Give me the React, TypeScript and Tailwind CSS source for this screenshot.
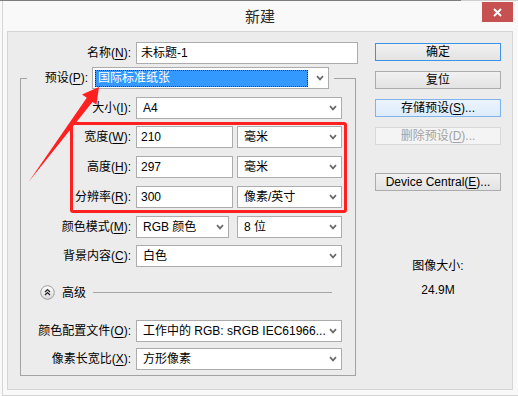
import type { ReactNode } from "react";

const FONT = "font-['Liberation_Sans','Noto_Sans_CJK_SC',sans-serif]";

function Key({ k }: { k: string }) {
  return <span className="underline underline-offset-[2px]">{k}</span>;
}

function Chevron() {
  return (
    <svg width="8" height="6" viewBox="0 0 8 6" className="shrink-0">
      <path d="M1 1.2 L4 4.4 L7 1.2" fill="none" stroke="#6a6a6a" strokeWidth="1.7" />
    </svg>
  );
}

function Select({ value, className = "" }: { value: ReactNode; className?: string }) {
  return (
    <div
      className={`flex h-[22px] shrink-0 items-center justify-between border border-[#acacac] bg-white pl-[6px] pr-[4px] ${className}`}
    >
      <span className="truncate whitespace-nowrap">{value}</span>
      <Chevron />
    </div>
  );
}

function Field({ value, className = "" }: { value: string; className?: string }) {
  return (
    <div className={`flex h-[22px] shrink-0 items-center border border-[#acacac] bg-white pl-[4px] ${className}`}>
      {value}
    </div>
  );
}

interface RowProps {
  label: string;
  k: string;
  labelW: string;
  className?: string;
  children: ReactNode;
}

function Row({ label, k, labelW, className = "", children }: RowProps) {
  return (
    <div className={`flex items-center gap-[5px] ${className}`}>
      <div className={`${labelW} shrink-0 whitespace-nowrap text-right`}>
        {label}(<Key k={k} />):
      </div>
      {children}
    </div>
  );
}

type BtnVariant = "default" | "normal" | "hover" | "disabled";

const btnClass: Record<BtnVariant, string> = {
  default: "border-[#3c93e6] bg-gradient-to-b from-[#f1f1f1] to-[#e3e3e3]",
  normal: "border-[#acacac] bg-gradient-to-b from-[#f1f1f1] to-[#e3e3e3]",
  hover: "border-[#7eb4ea] bg-gradient-to-b from-[#ecf4fc] to-[#dcecfc]",
  disabled: "border-[#d9d9d9] bg-[#f4f4f4] text-[#a3a3a3]",
};

function Btn({ variant = "normal", className = "", children }: { variant?: BtnVariant; className?: string; children: ReactNode }) {
  return (
    <div
      className={`flex h-[18px] w-[126px] items-center justify-center border leading-none whitespace-nowrap ${btnClass[variant]} ${className}`}
    >
      {children}
    </div>
  );
}

function AdvancedIcon() {
  return (
    <svg width="15" height="15" viewBox="0 0 15 15" className="shrink-0">
      <defs>
        <linearGradient id="adv" x1="0" y1="0" x2="0" y2="1">
          <stop offset="0" stopColor="#ffffff" />
          <stop offset="1" stopColor="#d9d9d9" />
        </linearGradient>
      </defs>
      <circle cx="7.5" cy="7.5" r="6.8" fill="url(#adv)" stroke="#9c9c9c" />
      <path d="M5 7 L7.5 4.6 L10 7 M5 10 L7.5 7.6 L10 10" fill="none" stroke="#222" strokeWidth="1.3" />
    </svg>
  );
}

export default function App() {
  return (
    <div className={`relative h-[396px] w-[518px] overflow-hidden bg-[#f9f9f9] text-[12px] text-black ${FONT}`}>
      <div className="flex h-px">
        <div className="w-[461px] bg-[#7d7d7d]" />
        <div className="flex-1 bg-[#cfcfcf]" />
      </div>

      <div className="ml-[2px] h-[395px] border-b border-l border-[#d6d6d6] pl-[4px] pr-[5px]">
        {/* title bar */}
        <div className="grid h-[30px] grid-cols-[1fr_auto_1fr] items-start">
          <div />
          <div className="self-center text-[15px] text-[#2b2b2b] font-['Noto_Sans_CJK_SC',sans-serif]">新建</div>
          <div className="mt-[1px] flex h-[20px] w-[31px] items-center justify-center justify-self-end bg-[#c75050]">
            <svg width="9" height="9" viewBox="0 0 9 9">
              <path d="M1 1 L8 8 M8 1 L1 8" stroke="#fff" strokeWidth="2" />
            </svg>
          </div>
        </div>

        {/* dialog body */}
        <div className="flex h-[359px] gap-[15px] border border-[#d5d5d5] bg-[#ececec] pt-[10px]">
          <div className="flex w-[352px] flex-col">
            <Row label="名称" k="N" labelW="w-[123px]">
              <Field value="未标题-1" className="w-[222px]" />
            </Row>

            <fieldset className="mt-[3px] ml-[12px] w-[336px] border border-[#a3a3a3] pb-[5px]">
              <legend className="ml-[6px]">
                <div className="flex items-center gap-[4px] pr-[5px]">
                  <div className="w-[61px] whitespace-nowrap text-right">
                    预设(<Key k="P" />):
                  </div>
                  <div className="flex h-[22px] w-[237px] items-center justify-between border border-[#acacac] bg-white pr-[4px]">
                    <div className="ml-[2px] flex h-[17px] w-[213px] items-center border border-dotted border-[#2a2a2a] bg-[#3399ff] pl-[2px] text-white">
                      国际标准纸张
                    </div>
                    <Chevron />
                  </div>
                </div>
              </legend>

              <Row label="大小" k="I" labelW="w-[110px]" className="mt-[8px]">
                <Select value="A4" className="w-[206px]" />
              </Row>

              <div className="mt-[3px] ml-[49px] flex w-[277px] flex-col gap-[8px] rounded-[3px] border-[3px] border-[#ff2020] pt-[1px] pb-[2px]">
                <Row label="宽度" k="W" labelW="w-[58px]">
                  <div className="flex gap-[4px]">
                    <Field value="210" className="w-[97px]" />
                    <Select value="毫米" className="w-[105px]" />
                  </div>
                </Row>
                <Row label="高度" k="H" labelW="w-[58px]">
                  <div className="flex gap-[4px]">
                    <Field value="297" className="w-[97px]" />
                    <Select value="毫米" className="w-[105px]" />
                  </div>
                </Row>
                <Row label="分辨率" k="R" labelW="w-[58px]">
                  <div className="flex gap-[4px]">
                    <Field value="300" className="w-[97px]" />
                    <Select value="像素/英寸" className="w-[105px]" />
                  </div>
                </Row>
              </div>

              <Row label="颜色模式" k="M" labelW="w-[110px]" className="mt-[3px]">
                <div className="flex gap-[8px]">
                  <Select value="RGB 颜色" className="w-[93px]" />
                  <Select value="8 位" className="w-[105px]" />
                </div>
              </Row>

              <Row label="背景内容" k="C" labelW="w-[110px]" className="mt-[7px]">
                <Select value="白色" className="w-[206px]" />
              </Row>

              <div className="mt-[18px] flex h-[15px] items-center pl-[19px] pr-[23px]">
                <AdvancedIcon />
                <span className="ml-[7px] whitespace-nowrap">高级</span>
                <div className="ml-[7px] h-px flex-1 bg-[#a5a5a5]" />
              </div>

              <Row label="颜色配置文件" k="O" labelW="w-[110px]" className="mt-[20px]">
                <Select value="工作中的 RGB: sRGB IEC61966..." className="w-[206px]" />
              </Row>

              <Row label="像素长宽比" k="X" labelW="w-[110px]" className="mt-[6px]">
                <Select value="方形像素" className="w-[206px]" />
              </Row>
            </fieldset>
          </div>

          <div className="flex w-[126px] flex-col items-center pt-[1px]">
            <div className="flex flex-col gap-[10px]">
              <Btn variant="default">确定</Btn>
              <Btn>复位</Btn>
              <Btn variant="hover">
                存储预设(<Key k="S" />)...
              </Btn>
              <Btn variant="disabled">
                删除预设(<Key k="D" />)...
              </Btn>
              <Btn className="mt-[18px]">
                Device Central(<Key k="E" />)...
              </Btn>
            </div>
            <div className="mt-[67px] leading-[16px]">图像大小:</div>
            <div className="mt-[8px] leading-[16px]">24.9M</div>
          </div>
        </div>
      </div>

      {/* annotation arrow */}
      <svg className="pointer-events-none absolute inset-0" width="518" height="396" viewBox="0 0 518 396">
        <polygon
          points="99,87 82,94.5 86.8,97.7 28.5,182 92.4,101.9 96.5,104.5"
          fill="#ff2020"
        />
      </svg>
    </div>
  );
}
